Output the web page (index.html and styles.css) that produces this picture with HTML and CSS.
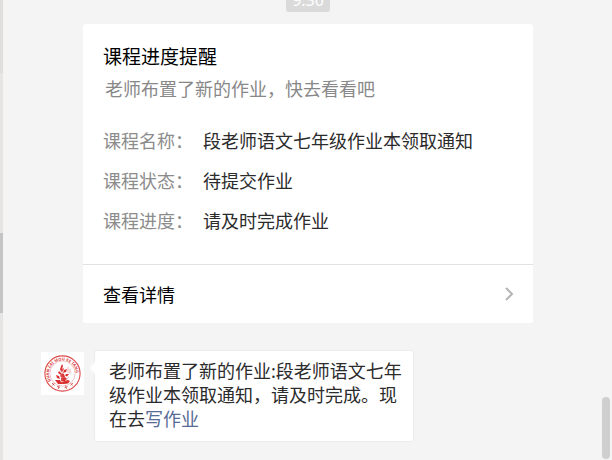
FILE: index.html
```html
<!DOCTYPE html>
<html lang="zh-CN">
<head>
  <meta charset="UTF-8">
  <meta name="viewport" content="width=device-width, initial-scale=1.0">
  <title>课程进度提醒</title>
  <link rel="stylesheet" href="styles.css">
</head>
<body>
  <div class="main_wrapper">
    <div class="side_strip">
      <div class="strip_active"></div>
      <div class="strip_upper"></div>
      <div class="strip_thumb"></div>
      <div class="strip_lower"></div>
    </div>
    <main class="chat">
      <section class="notice">
        <time class="chat_time">9:30</time>
        <div class="card">
          <div class="card_body">
            <h1>课程进度提醒</h1>
            <p class="card_intro">老师布置了新的作业，快去看看吧</p>
            <dl class="card_list">
              <dt>课程名称：</dt>
              <dd>段老师语文七年级作业本领取通知</dd>
              <dt>课程状态：</dt>
              <dd>待提交作业</dd>
              <dt>课程进度：</dt>
              <dd>请及时完成作业</dd>
            </dl>
          </div>
          <a class="card_link" href="#">
            <span>查看详情</span>
            <svg width="10" height="16" viewBox="0 0 10 16" fill="none" stroke="#b5b5b5" stroke-width="2">
              <path d="M1 2L7 8L1 14"/>
            </svg>
          </a>
        </div>
      </section>
      <div class="message">
        <svg class="avatar" viewBox="0 0 43 43">
          <defs>
            <path id="ring" d="M10 29A13.500 13.500 0 1 1 33 29"/>
          </defs>
          <rect width="43" height="43" fill="#fff"/>
          <circle cx="21.5" cy="21.5" r="17.600" fill="none" stroke="#dc4a4a" stroke-width="1.1"/>
          <circle cx="21.5" cy="21.5" r="12.600" fill="none" stroke="#e99" stroke-width=".6"/>
          <text class="seal_text"><textPath href="#ring">DUAN ZAI MOU KE TANG</textPath></text>
          <!-- plant in the middle of the seal -->
          <g fill="#d93030">
            <path d="M21 12l1 2-1 3 2-1-1 3-2 1-1-3z"/>
            <path d="M23 18l3-1-1 3-3 1zM18 19l2 2 0 2-3-2z"/>
            <path d="M21 21l2 1 1 3-3 1-2-2zM25 22l3 0-2 2.500-2-1z"/>
            <path d="M15 23l3 1 1 3-3-1zM20 26l4-1 2 2-2 2-4 0z"/>
            <path d="M14 28l5 0 1 2 7-2 2 1-2 2.500-4 .5-6 0z"/>
          </g>
          <path d="M21 16l0 15M27 15v6M29 17v5M24 28l4-3" fill="none" stroke="#e68080" stroke-width=".6"/>
          <path d="M11 31l2.500 2.500M13.500 31l-2 2.500M16 34.500l3 .8M18 33.500l-.6 3.500M23.500 35.500l3-.8M24.500 33.500l1 3.500M29.500 33.500l2.500-2.500M29.500 31l2 2.500" stroke="#d84a4a" stroke-width=".8"/>
        </svg>
        <div class="bubble">老师布置了新的作业:段老师语文七年级作业本领取通知，请及时完成。现在去<a href="#">写作业</a></div>
      </div>
    </main>
    <div class="scrollbar">
      <div class="scroll_thumb"></div>
    </div>
  </div>
</body>
</html>
```
FILE: styles.css
```css
* {
  box-sizing: border-box;
  font-family: "Noto Sans", "Noto Sans CJK SC", sans-serif;
}
body {
  margin: 0;
  background: #f4f4f4;
  font-size: 18px;
  color: #2b2b2b;
}
a {
  text-decoration: none;
}
.main_wrapper {
  display: flex;
  height: 100vh;
  overflow: hidden;
}
.side_strip {
  display: flex;
  flex-direction: column;
  width: 3px;
}
.strip_active {
  flex: 73;
  background: #e0dedd;
}
.strip_upper {
  flex: 160;
  background: #e6e5e4;
}
.strip_thumb {
  flex: 80;
  background: #c4c4c4;
}
.strip_lower {
  flex: 147;
  background: #e6e5e4;
}
.chat {
  flex: 1;
  padding: 0 69px 0 38px;
}
.notice {
  display: flex;
  flex-direction: column;
  align-items: center;
  margin-left: 42px;
}
.chat_time {
  margin: -12px 0 12px;
  padding: 0 6px;
  border-radius: 3px;
  background: #dadada;
  color: #fff;
  font-size: 16px;
  line-height: 24px;
}
.card {
  width: 100%;
  border-radius: 3px;
  background: #fff;
}
.card_body {
  padding: 19px 20px 23px;
}
h1 {
  margin: 0;
  color: #000;
  font-size: 19px;
  font-weight: 400;
  line-height: 28px;
}
.card_intro {
  margin: 4px 2px 18px;
  color: #888;
  line-height: 28px;
}
.card_list {
  display: grid;
  grid-template-columns: 100px 1fr;
  margin: 0;
  line-height: 40px;
}
dt {
  color: #8c8c8c;
}
dd {
  margin: 0;
}
.card_link {
  display: flex;
  align-items: center;
  justify-content: space-between;
  height: 59px;
  padding: 0 18px 1px 20px;
  border-top: 1px solid #e2e2e2;
  color: #000;
}
.message {
  display: flex;
  align-items: flex-start;
  gap: 10px;
  margin-top: 27px;
}
.avatar {
  flex: none;
  width: 43px;
  height: 43px;
  margin-top: 2px;
}
.seal_text {
  fill: #d84040;
  font-size: 4px;
  font-weight: 700;
}
.bubble {
  position: relative;
  max-width: 320px;
  padding: 8px 10px 10px 14px;
  border: 1px solid #ebebeb;
  border-radius: 3px;
  background: #fff;
  line-height: 24px;
}
/* arrow pointing to the avatar */
.bubble::before {
  content: "";
  position: absolute;
  top: 11px;
  left: -5px;
  border: 6px solid transparent;
  border-left: 0;
  border-right: 5px solid #fff;
}
.bubble a {
  color: #576b95;
}
.scrollbar {
  display: flex;
  align-items: flex-end;
  padding: 0 2px 1px 0;
}
.scroll_thumb {
  width: 8px;
  height: 62px;
  border-radius: 4px;
  background: #cfcfcf;
}
```
